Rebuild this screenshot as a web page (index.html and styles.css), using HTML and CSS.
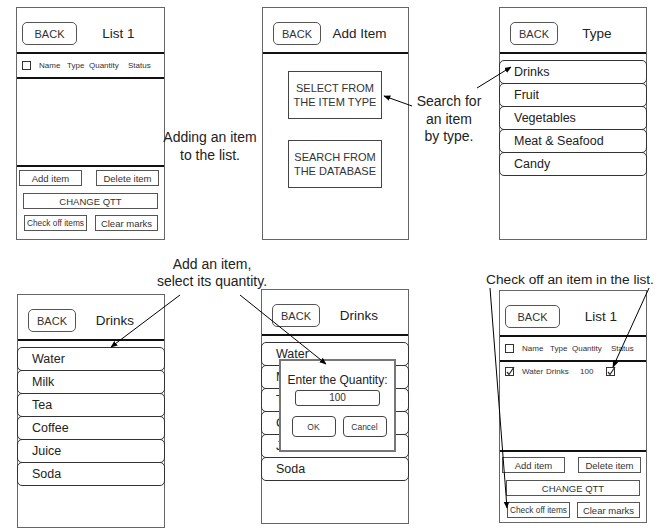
FILE: index.html
```html
<!DOCTYPE html>
<html lang="en">
<head>
    <meta charset="UTF-8">
    <meta name="viewport" content="width=device-width, initial-scale=1.0">
    <title>Shopping List Wireframes</title>
    <link rel="stylesheet" href="styles.css">
</head>
<body>
    <div class="board">

        <!-- List screen (empty) -->
        <section class="screen screen-list pos-list">
            <header class="screen-head">
                <span class="back">BACK</span>
                <span class="title">List 1</span>
            </header>
            <div class="col-head cols">
                <span class="box"></span>
                <span>Name</span>
                <span>Type</span>
                <span>Quantity</span>
                <span>Status</span>
            </div>
            <div class="list-body"></div>
            <footer class="list-foot">
                <div class="foot-row foot-row-a">
                    <span class="btn">Add item</span>
                    <span class="btn">Delete item</span>
                </div>
                <div class="btn btn-wide">CHANGE QTT</div>
                <div class="foot-row foot-row-b">
                    <span class="btn btn-small">Check off items</span>
                    <span class="btn">Clear marks</span>
                </div>
            </footer>
        </section>

        <!-- Add item screen -->
        <section class="screen pos-add">
            <header class="screen-head">
                <span class="back">BACK</span>
                <span class="title">Add Item</span>
            </header>
            <div class="option option-first">SELECT FROM<br>THE ITEM TYPE</div>
            <div class="option">SEARCH FROM<br>THE DATABASE</div>
        </section>

        <!-- Type screen -->
        <section class="screen pos-type">
            <header class="screen-head">
                <span class="back">BACK</span>
                <span class="title">Type</span>
            </header>
            <div class="rows">
                <div class="row">Drinks</div>
                <div class="row">Fruit</div>
                <div class="row">Vegetables</div>
                <div class="row">Meat &amp; Seafood</div>
                <div class="row">Candy</div>
            </div>
        </section>

        <!-- Drinks screen -->
        <section class="screen pos-drinks">
            <header class="screen-head">
                <span class="back">BACK</span>
                <span class="title">Drinks</span>
            </header>
            <div class="rows">
                <div class="row">Water</div>
                <div class="row">Milk</div>
                <div class="row">Tea</div>
                <div class="row">Coffee</div>
                <div class="row">Juice</div>
                <div class="row">Soda</div>
            </div>
        </section>

        <!-- Drinks screen with quantity dialog -->
        <section class="screen pos-qty">
            <header class="screen-head">
                <span class="back">BACK</span>
                <span class="title">Drinks</span>
            </header>
            <div class="rows">
                <div class="row">Water</div>
                <div class="row">Milk</div>
                <div class="row">Tea</div>
                <div class="row">Coffee</div>
                <div class="row">Juice</div>
                <div class="row">Soda</div>
            </div>
            <div class="dialog">
                <div class="dialog-title">Enter the Quantity:</div>
                <div class="dialog-input">100</div>
                <div class="dialog-buttons">
                    <span class="dialog-btn">OK</span>
                    <span class="dialog-btn">Cancel</span>
                </div>
            </div>
        </section>

        <!-- List screen with one item -->
        <section class="screen screen-list pos-done">
            <header class="screen-head">
                <span class="back">BACK</span>
                <span class="title">List 1</span>
            </header>
            <div class="col-head cols">
                <span class="box"></span>
                <span>Name</span>
                <span>Type</span>
                <span>Quantity</span>
                <span>Status</span>
            </div>
            <div class="list-body">
                <div class="item-row cols">
                    <svg class="check" width="10" height="10" viewBox="0 0 10 10">
                        <rect x="0.5" y="1.5" width="8" height="8" fill="none" stroke="#333"/>
                        <path d="M2 6 L4 8.5 L9 1" fill="none" stroke="#333" stroke-width="1.3"/>
                    </svg>
                    <span>Water</span>
                    <span class="item-type">Drinks</span>
                    <span class="item-qty">100</span>
                    <svg class="check item-status" width="10" height="10" viewBox="0 0 10 10">
                        <rect x="0.5" y="1.5" width="8" height="8" fill="none" stroke="#333"/>
                        <path d="M2 6 L4 8.5 L9 1" fill="none" stroke="#333" stroke-width="1.3"/>
                    </svg>
                </div>
            </div>
            <footer class="list-foot">
                <div class="foot-row foot-row-a">
                    <span class="btn">Add item</span>
                    <span class="btn">Delete item</span>
                </div>
                <div class="btn btn-wide">CHANGE QTT</div>
                <div class="foot-row foot-row-b">
                    <span class="btn btn-small">Check off items</span>
                    <span class="btn">Clear marks</span>
                </div>
            </footer>
        </section>

        <!-- Notes -->
        <div class="note note-add">Adding an item<br>to the list.</div>
        <div class="note note-type">Search for<br>an item<br>by type.</div>
        <div class="note note-qty">Add an item,<br>select its quantity.</div>
        <div class="note note-check">Check off an item in the list.</div>

        <!-- Connectors -->
        <svg class="arrows" width="666" height="531" viewBox="0 0 666 531">
            <defs>
                <marker id="head" viewBox="0 0 10 10" refX="9" refY="5" markerWidth="7" markerHeight="7" orient="auto">
                    <path d="M0 1 L10 5 L0 9 z" fill="#000"/>
                </marker>
            </defs>
            <line x1="412" y1="106" x2="384" y2="96" marker-end="url(#head)"/>
            <line x1="477" y1="88" x2="511" y2="67" marker-end="url(#head)"/>
            <line x1="180" y1="295" x2="111" y2="347" marker-end="url(#head)"/>
            <line x1="240" y1="295" x2="326" y2="364" marker-end="url(#head)"/>
            <line x1="490" y1="288" x2="507" y2="508" marker-end="url(#head)"/>
            <line x1="649" y1="288" x2="613" y2="367" marker-end="url(#head)"/>
        </svg>
    </div>
</body>
</html>
```

FILE: styles.css
```css
/* Basic Reset */
* {
    margin: 0;
    padding: 0;
    box-sizing: border-box;
}

body {
    font-family: 'Liberation Sans', Arial, sans-serif;
    background-color: #ffffff;
    color: #222;
}

.board {
    position: relative;
    width: 666px;
    height: 531px;
    overflow: hidden;
}

/* Screens placed on the canvas */
.screen {
    position: absolute;
    display: flex;
    flex-direction: column;
    border: 1px solid #666;
    background-color: #ffffff;
}

.pos-list  { left: 16px;  top: 7px;   width: 149px; height: 233px; }
.pos-add   { left: 262px; top: 7px;   width: 147px; height: 233px; }
.pos-type  { left: 499px; top: 7px;   width: 148px; height: 233px; }
.pos-drinks{ left: 17px;  top: 294px; width: 148px; height: 234px; }
.pos-qty   { left: 261px; top: 289px; width: 148px; height: 235px; }
.pos-done  { left: 499px; top: 290px; width: 148px; height: 233px; }

.screen-head {
    display: flex;
    align-items: center;
    flex-shrink: 0;
    height: 46px;
    padding: 14px 0 7px;
    border-bottom: 2px solid #111;
}

.back {
    display: flex;
    align-items: center;
    justify-content: center;
    width: 48px;
    height: 23px;
    margin-left: 10px;
    border: 1px solid #555;
    border-radius: 5px;
    font-size: 11px;
    color: #333;
}

.title {
    flex: 1;
    text-align: center;
    padding-right: 10px;
    font-size: 13.5px;
    color: #222;
}

.screen-list .back {
    width: 55px;
    margin-left: 5px;
}

.screen-list .title {
    padding-right: 4px;
}

/* List table */
.cols {
    display: grid;
    grid-template-columns: 17px 28px 22px 39px auto;
    align-items: center;
    padding-left: 5px;
    font-size: 8px;
    color: #333;
}

.col-head {
    flex-shrink: 0;
    height: 25px;
    border-bottom: 2px solid #111;
}

.box {
    width: 9px;
    height: 9px;
    border: 1px solid #333;
}

.list-body {
    flex: 1;
    border-bottom: 2px solid #111;
}

.item-row {
    height: 16px;
    margin-top: 1px;
}

.item-type {
    margin-left: -4px;
}

.item-qty {
    padding-left: 8px;
}

.item-status {
    margin-left: -5px;
}

.check {
    display: block;
}

.list-foot {
    flex-shrink: 0;
    height: 72px;
    display: flex;
    flex-direction: column;
    padding-top: 3px;
}

.pos-done .list-foot {
    height: 70px;
    padding-top: 5px;
}

.foot-row {
    display: flex;
    justify-content: space-between;
}

.foot-row-a {
    padding: 0 5px 0 2px;
}

.foot-row-b {
    padding: 0 6px 0 7px;
    margin-top: 6px;
}

.btn {
    display: flex;
    align-items: center;
    justify-content: center;
    width: 63px;
    height: 16px;
    border: 1px solid #555;
    font-size: 9.5px;
    color: #333;
    white-space: nowrap;
}

.btn-wide {
    width: auto;
    height: 16px;
    margin: 7px 6px 0 6px;
}

.btn-small {
    font-size: 8.3px;
}

/* Add item options */
.option {
    display: flex;
    align-items: center;
    justify-content: center;
    width: 94px;
    height: 48px;
    margin: 21px 0 0 25px;
    border: 1px solid #444;
    text-align: center;
    font-size: 11px;
    line-height: 14px;
    color: #333;
}

.option-first {
    margin-top: 17px;
}

/* Rounded list rows */
.rows {
    padding-top: 7px;
}

.row {
    display: flex;
    align-items: center;
    height: 24px;
    margin: -1px -1px 0;
    padding-left: 14px;
    border: 1px solid #333;
    border-radius: 5px;
    font-size: 12.5px;
    color: #222;
}

/* Quantity dialog */
.dialog {
    position: absolute;
    left: 17px;
    top: 69px;
    width: 117px;
    height: 93px;
    display: flex;
    flex-direction: column;
    align-items: center;
    padding-top: 10px;
    border: 2px solid #777;
    background-color: #ffffff;
}

.dialog-title {
    font-size: 12px;
    line-height: 18px;
    color: #222;
}

.dialog-input {
    width: 85px;
    height: 16px;
    margin-top: 1px;
    border: 1px solid #444;
    border-radius: 3px;
    text-align: center;
    font-size: 10px;
    line-height: 14px;
    color: #333;
}

.dialog-buttons {
    display: flex;
    gap: 7px;
    margin-top: 10px;
    padding-left: 3px;
}

.dialog-btn {
    display: flex;
    align-items: center;
    justify-content: center;
    width: 44px;
    height: 21px;
    border: 1px solid #444;
    border-radius: 4px;
    font-size: 8.5px;
    color: #333;
}

/* Annotations */
.note {
    position: absolute;
    text-align: center;
    font-size: 14px;
    color: #222;
}

.note-add   { left: 150px; top: 128px; width: 120px; line-height: 18px; }
.note-type  { left: 404px; top: 93px;  width: 90px;  line-height: 17.5px; }
.note-qty   { left: 137px; top: 256px; width: 150px; line-height: 17px; }
.note-check { left: 470px; top: 271px; width: 200px; line-height: 18px; font-size: 13.7px; }

.arrows {
    position: absolute;
    left: 0;
    top: 0;
    pointer-events: none;
}

.arrows line {
    stroke: #000;
    stroke-width: 1;
}
```
